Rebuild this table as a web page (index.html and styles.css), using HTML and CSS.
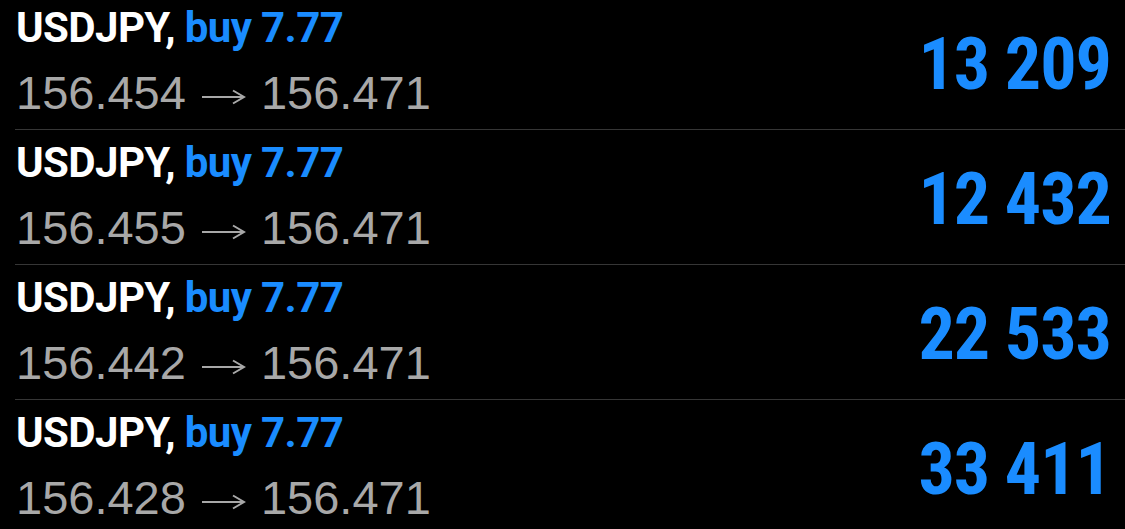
FILE: index.html
```html
<!DOCTYPE html>
<html>
<head>
<meta charset="utf-8">
<link rel="stylesheet" href="styles.css">
</head>
<body>
<div class="list">
  <div class="row">
    <div class="left">
      <div class="title">USDJPY, <span class="buy">buy 7.77</span></div>
      <div class="prices">156.454<span class="arrow"><svg viewBox="0 0 44 16" width="44" height="16"><path d="M0 8H42M31 1.5L42 8L31 14.5" fill="none" stroke="#a8a8a8" stroke-width="2"/></svg></span>156.471</div>
    </div>
    <div class="profit">13 209</div>
  </div>
  <div class="row">
    <div class="left">
      <div class="title">USDJPY, <span class="buy">buy 7.77</span></div>
      <div class="prices">156.455<span class="arrow"><svg viewBox="0 0 44 16" width="44" height="16"><path d="M0 8H42M31 1.5L42 8L31 14.5" fill="none" stroke="#a8a8a8" stroke-width="2"/></svg></span>156.471</div>
    </div>
    <div class="profit">12 432</div>
  </div>
  <div class="row">
    <div class="left">
      <div class="title">USDJPY, <span class="buy">buy 7.77</span></div>
      <div class="prices">156.442<span class="arrow"><svg viewBox="0 0 44 16" width="44" height="16"><path d="M0 8H42M31 1.5L42 8L31 14.5" fill="none" stroke="#a8a8a8" stroke-width="2"/></svg></span>156.471</div>
    </div>
    <div class="profit">22 533</div>
  </div>
  <div class="row">
    <div class="left">
      <div class="title">USDJPY, <span class="buy">buy 7.77</span></div>
      <div class="prices">156.428<span class="arrow"><svg viewBox="0 0 44 16" width="44" height="16"><path d="M0 8H42M31 1.5L42 8L31 14.5" fill="none" stroke="#a8a8a8" stroke-width="2"/></svg></span>156.471</div>
    </div>
    <div class="profit">33 411</div>
  </div>
</div>
</body>
</html>
```
FILE: styles.css
```css
html, body {
  margin: 0;
  padding: 0;
  background: #000;
  overflow: hidden;
}
.list {
  display: flex;
  flex-direction: column;
  margin-top: -5px;
}
.row {
  display: flex;
  justify-content: space-between;
  height: 134px;
  margin-left: 15px;
  padding: 0 14px 0 1px;
  border-bottom: 1px solid #363636;
}
.left {
  padding-top: 12px;
}
.title {
  font-family: Roboto, "Liberation Sans", sans-serif;
  font-stretch: 92%;
  font-weight: bold;
  font-size: 42px;
  line-height: 42px;
  letter-spacing: -0.6px;
  color: #fff;
  white-space: nowrap;
}
.buy {
  color: #1a8cff;
}
.prices {
  margin-top: 21px;
  font-family: "Liberation Sans", Arial, sans-serif;
  font-size: 47px;
  line-height: 46px;
  color: #a8a8a8;
  white-space: nowrap;
}
.arrow {
  display: inline-block;
  margin: 0 15px 0 16px;
  vertical-align: 4px;
}
.arrow svg {
  display: block;
}
.profit {
  align-self: center;
  padding-top: 5px;
  font-family: Roboto, "Liberation Sans", sans-serif;
  font-stretch: 75%;
  font-weight: bold;
  font-size: 72px;
  line-height: 72px;
  letter-spacing: -1px;
  color: #1a8cff;
  white-space: nowrap;
}
```
